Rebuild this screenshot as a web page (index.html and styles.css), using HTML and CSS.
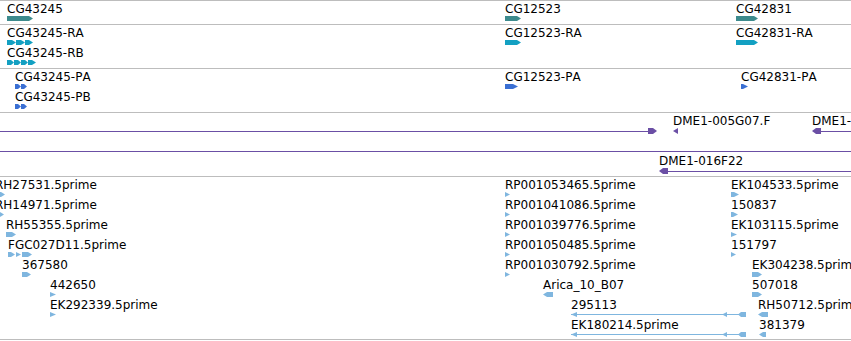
FILE: index.html
```html
<!DOCTYPE html>
<html lang="en">
<head>
    <meta charset="UTF-8">
    <title>Track view</title>
    <link rel="stylesheet" href="styles.css">
</head>
<body>
    <div class="track-list">

        <!-- genes -->
        <div class="track track-genes">
            <div class="feat" style="left:7px;top:1px">
                <span class="label">CG43245</span>
                <svg class="glyph gene" width="26" height="5"><polygon points="0,0 22,0 26,2.5 22,5 0,5"/></svg>
            </div>
            <div class="feat" style="left:505px;top:1px">
                <span class="label">CG12523</span>
                <svg class="glyph gene" width="16" height="5"><polygon points="0,0 12,0 16,2.5 12,5 0,5"/></svg>
            </div>
            <div class="feat" style="left:736px;top:1px">
                <span class="label">CG42831</span>
                <svg class="glyph gene" width="22" height="5"><polygon points="0,0 18,0 22,2.5 18,5 0,5"/></svg>
            </div>
        </div>

        <!-- transcripts -->
        <div class="track track-mid">
            <div class="feat" style="left:7px;top:1px">
                <span class="label">CG43245-RA</span>
                <svg class="glyph mrna" width="26" height="5">
                    <polygon points="0,0 5,0 9,2.5 5,5 0,5"/>
                    <polygon points="9,0 14,0 18,2.5 14,5 9,5"/>
                    <polygon points="18,0 22,0 26,2.5 22,5 18,5"/>
                </svg>
            </div>
            <div class="feat" style="left:7px;top:21px">
                <span class="label">CG43245-RB</span>
                <svg class="glyph mrna" width="29" height="5">
                    <polygon points="0,0 4,0 7,2.5 4,5 0,5"/>
                    <polygon points="7,0 11,0 14,2.5 11,5 7,5"/>
                    <polygon points="14,0 18,0 21,2.5 18,5 14,5"/>
                    <polygon points="21,0 25,0 29,2.5 25,5 21,5"/>
                </svg>
            </div>
            <div class="feat" style="left:505px;top:1px">
                <span class="label">CG12523-RA</span>
                <svg class="glyph mrna" width="16" height="5"><polygon points="0,0 12,0 16,2.5 12,5 0,5"/></svg>
            </div>
            <div class="feat" style="left:736px;top:1px">
                <span class="label">CG42831-RA</span>
                <svg class="glyph mrna" width="22" height="5"><polygon points="0,0 18,0 22,2.5 18,5 0,5"/></svg>
            </div>
        </div>

        <!-- proteins -->
        <div class="track track-mid">
            <div class="feat" style="left:15px;top:1px">
                <span class="label">CG43245-PA</span>
                <svg class="glyph cds" width="12" height="5">
                    <polygon points="0,0 3,0 6,2.5 3,5 0,5"/>
                    <polygon points="6,0 9,0 12,2.5 9,5 6,5"/>
                </svg>
            </div>
            <div class="feat" style="left:15px;top:21px">
                <span class="label">CG43245-PB</span>
                <svg class="glyph cds" width="12" height="5">
                    <polygon points="0,0 3,0 6,2.5 3,5 0,5"/>
                    <polygon points="6,0 9,0 12,2.5 9,5 6,5"/>
                </svg>
            </div>
            <div class="feat" style="left:505px;top:1px">
                <span class="label">CG12523-PA</span>
                <svg class="glyph cds" width="13" height="5"><polygon points="0,0 8,0 13,2.5 8,5 0,5"/></svg>
            </div>
            <div class="feat" style="left:741px;top:1px">
                <span class="label">CG42831-PA</span>
                <svg class="glyph cds" width="7" height="5"><polygon points="0,0 2,0 7,2.5 2,5 0,5"/></svg>
            </div>
        </div>

        <!-- clones -->
        <div class="track track-clones">
            <div class="feat" style="left:0;top:1px">
                <span class="label"></span>
                <svg class="glyph clone" width="657" height="6">
                    <rect x="0" y="3" width="650" height="1"/>
                    <polygon points="648,0 653,0 657,3 653,6 648,6"/>
                </svg>
            </div>
            <div class="feat" style="left:673px;top:1px">
                <span class="label">DME1-005G07.F</span>
                <svg class="glyph clone" width="5" height="6"><polygon points="5,0 0,3 5,6"/></svg>
            </div>
            <div class="feat" style="left:812px;top:1px">
                <span class="label">DME1-</span>
                <svg class="glyph clone" width="60" height="6">
                    <polygon points="0,3 4,0 9,0 9,6 4,6"/>
                    <rect x="8" y="3" width="52" height="1"/>
                </svg>
            </div>
            <div class="feat" style="left:0;top:21px">
                <span class="label"></span>
                <svg class="glyph clone" width="851" height="6"><rect x="0" y="3" width="851" height="1"/></svg>
            </div>
            <div class="feat" style="left:659px;top:41px">
                <span class="label">DME1-016F22</span>
                <svg class="glyph clone" width="200" height="6">
                    <polygon points="0,3 4,0 9,0 9,6 4,6"/>
                    <rect x="8" y="3" width="192" height="1"/>
                </svg>
            </div>
        </div>

        <!-- ESTs -->
        <div class="track track-est">
            <div class="feat" style="left:-5px;top:1px">
                <span class="label">RH27531.5prime</span>
                <svg class="glyph est" width="10" height="5"><polygon points="0,0 6,0 10,2.5 6,5 0,5"/></svg>
            </div>
            <div class="feat" style="left:-5px;top:21px">
                <span class="label">RH14971.5prime</span>
                <svg class="glyph est" width="9" height="5"><polygon points="0,0 5,0 9,2.5 5,5 0,5"/></svg>
            </div>
            <div class="feat" style="left:6px;top:41px">
                <span class="label">RH55355.5prime</span>
                <svg class="glyph est" width="10" height="5"><polygon points="0,0 6,0 10,2.5 6,5 0,5"/></svg>
            </div>
            <div class="feat" style="left:8px;top:61px">
                <span class="label">FGC027D11.5prime</span>
                <svg class="glyph est" width="24" height="5">
                    <polygon points="0,0 3,0 7,2.5 3,5 0,5"/>
                    <polygon points="8,0 13,2.5 8,5"/>
                    <polygon points="14,0 20,0 24,2.5 20,5 14,5"/>
                </svg>
            </div>
            <div class="feat" style="left:22px;top:81px">
                <span class="label">367580</span>
                <svg class="glyph est" width="9" height="5"><polygon points="0,0 5,0 9,2.5 5,5 0,5"/></svg>
            </div>
            <div class="feat" style="left:50px;top:101px">
                <span class="label">442650</span>
                <svg class="glyph est" width="6" height="5"><polygon points="0,0 6,2.5 0,5"/></svg>
            </div>
            <div class="feat" style="left:50px;top:121px">
                <span class="label">EK292339.5prime</span>
                <svg class="glyph est" width="6" height="5"><polygon points="0,0 6,2.5 0,5"/></svg>
            </div>

            <div class="feat" style="left:505px;top:1px">
                <span class="label">RP001053465.5prime</span>
                <svg class="glyph est" width="5" height="5"><polygon points="0,0 5,2.5 0,5"/></svg>
            </div>
            <div class="feat" style="left:505px;top:21px">
                <span class="label">RP001041086.5prime</span>
                <svg class="glyph est" width="5" height="5"><polygon points="0,0 5,2.5 0,5"/></svg>
            </div>
            <div class="feat" style="left:505px;top:41px">
                <span class="label">RP001039776.5prime</span>
                <svg class="glyph est" width="5" height="5"><polygon points="0,0 5,2.5 0,5"/></svg>
            </div>
            <div class="feat" style="left:505px;top:61px">
                <span class="label">RP001050485.5prime</span>
                <svg class="glyph est" width="5" height="5"><polygon points="0,0 5,2.5 0,5"/></svg>
            </div>
            <div class="feat" style="left:505px;top:81px">
                <span class="label">RP001030792.5prime</span>
                <svg class="glyph est" width="5" height="5"><polygon points="0,0 5,2.5 0,5"/></svg>
            </div>
            <div class="feat" style="left:543px;top:101px">
                <span class="label">Arica_10_B07</span>
                <svg class="glyph est" width="10" height="5"><polygon points="0,2.5 4,0 10,0 10,5 4,5"/></svg>
            </div>
            <div class="feat" style="left:571px;top:121px">
                <span class="label">295113</span>
                <svg class="glyph est" width="176" height="5">
                    <rect x="0" y="2" width="175" height="1"/>
                    <polygon points="0,2.5 6,0 6,5"/>
                    <polygon points="151,2.5 156,0 156,5"/>
                    <polygon points="167,2.5 170,0 175,0 175,5 170,5"/>
                </svg>
            </div>
            <div class="feat" style="left:571px;top:141px">
                <span class="label">EK180214.5prime</span>
                <svg class="glyph est" width="176" height="5">
                    <rect x="0" y="2" width="175" height="1"/>
                    <polygon points="0,2.5 6,0 6,5"/>
                    <polygon points="151,2.5 156,0 156,5"/>
                    <polygon points="167,2.5 170,0 175,0 175,5 170,5"/>
                </svg>
            </div>

            <div class="feat" style="left:731px;top:1px">
                <span class="label">EK104533.5prime</span>
                <svg class="glyph est" width="8" height="5"><polygon points="0,0 3,0 8,2.5 3,5 0,5"/></svg>
            </div>
            <div class="feat" style="left:731px;top:21px">
                <span class="label">150837</span>
                <svg class="glyph est" width="7" height="5"><polygon points="0,0 2,0 7,2.5 2,5 0,5"/></svg>
            </div>
            <div class="feat" style="left:731px;top:41px">
                <span class="label">EK103115.5prime</span>
                <svg class="glyph est" width="6" height="5"><polygon points="0,0 6,2.5 0,5"/></svg>
            </div>
            <div class="feat" style="left:731px;top:61px">
                <span class="label">151797</span>
                <svg class="glyph est" width="5" height="5"><polygon points="0,0 5,2.5 0,5"/></svg>
            </div>
            <div class="feat" style="left:752px;top:81px">
                <span class="label">EK304238.5prime</span>
                <svg class="glyph est" width="10" height="5"><polygon points="0,0 6,0 10,2.5 6,5 0,5"/></svg>
            </div>
            <div class="feat" style="left:752px;top:101px">
                <span class="label">507018</span>
                <svg class="glyph est" width="10" height="5"><polygon points="0,0 6,0 10,2.5 6,5 0,5"/></svg>
            </div>
            <div class="feat" style="left:758px;top:121px">
                <span class="label">RH50712.5prime</span>
                <svg class="glyph est" width="10" height="5"><polygon points="0,2.5 4,0 10,0 10,5 4,5"/></svg>
            </div>
            <div class="feat" style="left:759px;top:141px">
                <span class="label">381379</span>
                <svg class="glyph est" width="7" height="5"><polygon points="0,2.5 4,0 7,0 7,5 4,5"/></svg>
            </div>
        </div>

    </div>
</body>
</html>
```

FILE: styles.css
```css
* {
    margin: 0;
    padding: 0;
    box-sizing: border-box;
}

html,
body {
    overflow: hidden;
}

body {
    font-family: 'DejaVu Sans', 'Liberation Sans', sans-serif;
    font-size: 12px;
    font-kerning: none;
    color: #000;
    background: #fff;
    width: 851px;
    height: 341px;
}

.track-list {
    width: 851px;
    overflow: hidden;
}

.track {
    position: relative;
    border-top: 1px solid #bdbdbd;
}

.track-genes {
    height: 24px;
}

.track-mid {
    height: 44px;
}

.track-clones {
    height: 64px;
}

.track-est {
    height: 164px;
    border-bottom: 1px solid #bdbdbd;
}

/* one feature = label on top, glyph below */
.feat {
    position: absolute;
}

.label {
    display: block;
    height: 14px;
    line-height: 14px;
    white-space: nowrap;
}

.glyph {
    display: block;
    overflow: visible;
}

.gene { fill: #3d8b8d; }
.mrna { fill: #13a0c2; }
.cds { fill: #3a6fd3; }
.clone { fill: #6b4fa5; }
.est { fill: #7fb6df; }
```
